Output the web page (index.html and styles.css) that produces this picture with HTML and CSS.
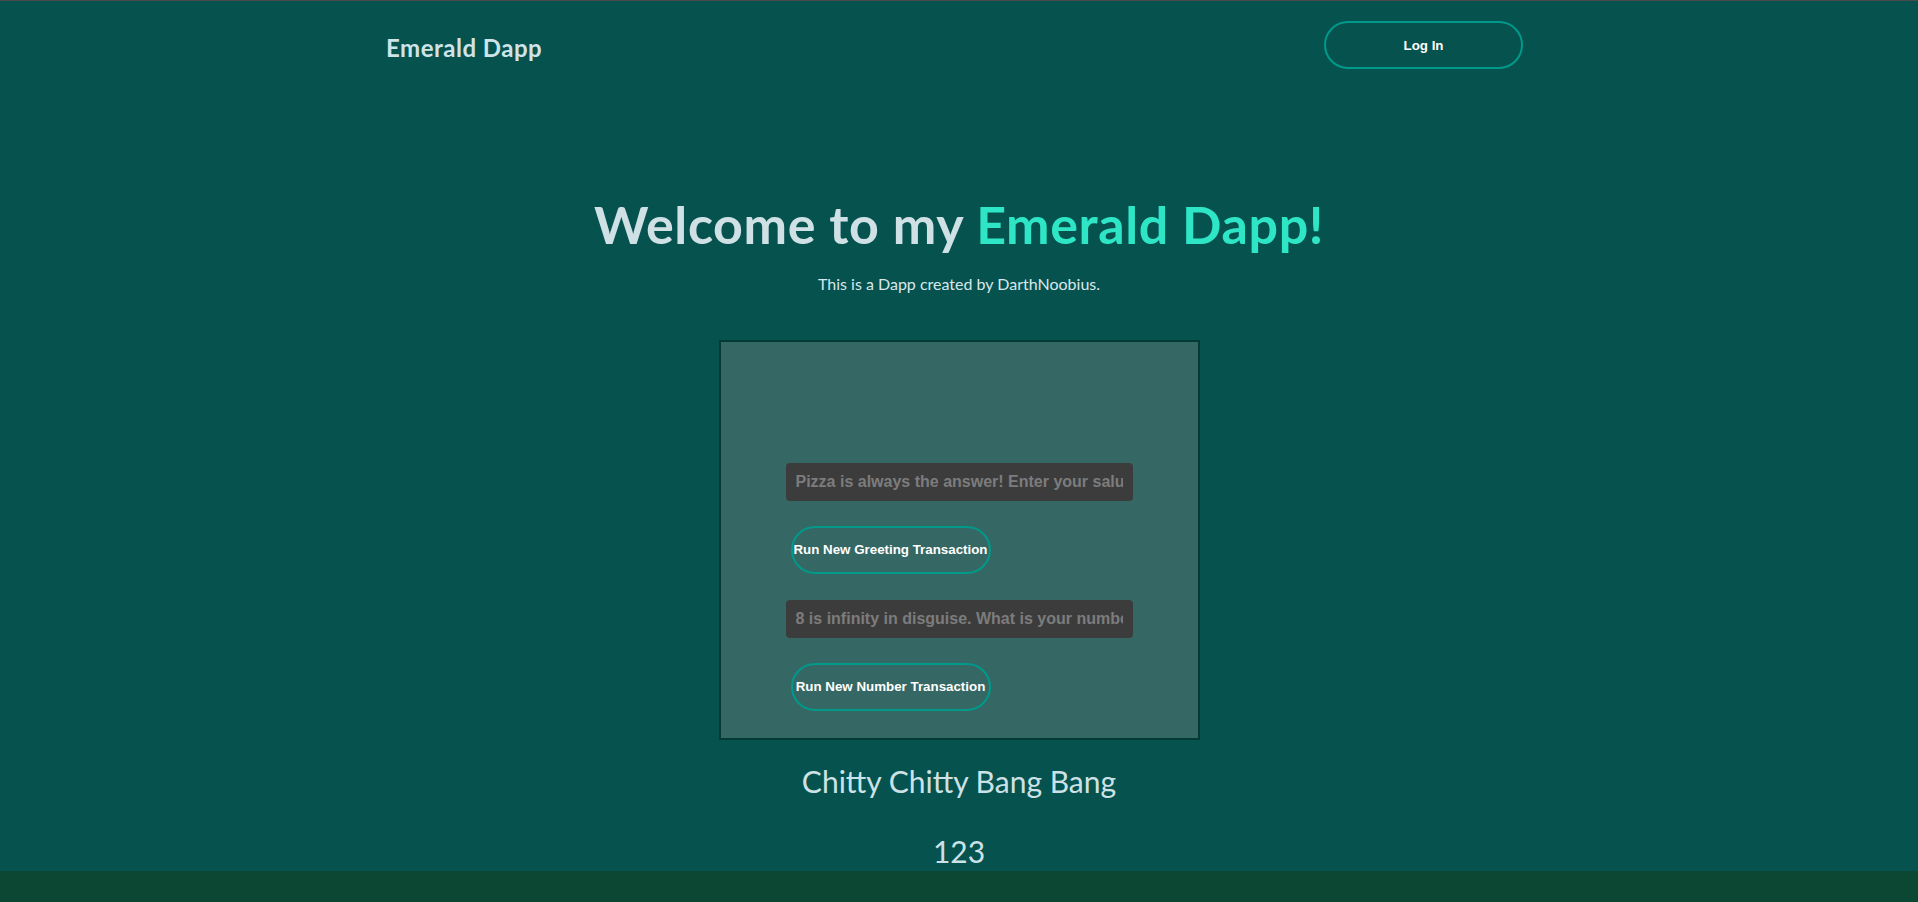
FILE: index.html
```html
<!DOCTYPE html>
<html lang="en">
<head>
<meta charset="utf-8">
<title>Emerald Dapp</title>
<link rel="stylesheet" href="styles.css">
</head>
<body>
<div class="page">
  <header class="nav">
    <span class="brand">Emerald Dapp</span>
    <button class="pill login">Log In</button>
  </header>
  <main class="main">
    <h1 class="title">Welcome to my <span class="accent">Emerald Dapp!</span></h1>
    <p class="subtitle">This is a Dapp created by DarthNoobius.</p>
    <div class="card">
      <input class="field" type="text" placeholder="Pizza is always the answer! Enter your salutation">
      <button class="pill action">Run New Greeting Transaction</button>
      <input class="field" type="text" placeholder="8 is infinity in disguise. What is your number?">
      <button class="pill action">Run New Number Transaction</button>
    </div>
    <p class="big first">Chitty Chitty Bang Bang</p>
    <p class="big second">123</p>
  </main>
  <footer class="footer"></footer>
</div>
</body>
</html>
```

FILE: styles.css
```css
html, body {
  margin: 0;
  padding: 0;
  background: #05524f;
}
body {
  font-family: "Lato", "Noto Sans", sans-serif;
  color: #d2e3e8;
}
.page {
  min-height: 100vh;
  display: flex;
  flex-direction: column;
  border-top: 1px solid #4b4b4b;
  box-sizing: border-box;
}
.nav {
  display: flex;
  justify-content: space-between;
  align-items: center;
  padding: 20px 395px 21px 386px;
}
.brand {
  font-size: 24px;
  letter-spacing: 0.5px;
  font-weight: 700;
  color: #cfe4e9;
  margin-top: 4px;
}
.pill {
  font-family: "Liberation Sans", Arial, sans-serif;
  font-weight: 700;
  font-size: 13.33px;
  color: #ffffff;
  background: transparent;
  border: 2px solid #00998a;
  border-radius: 24px;
  cursor: pointer;
}
.login {
  width: 199px;
  height: 48px;
}
.main {
  flex: 1;
  display: flex;
  flex-direction: column;
  align-items: center;
  padding-top: 103px;
}
.title {
  margin: 0;
  font-size: 52px;
  letter-spacing: 0.6px;
  line-height: 1.2;
  font-weight: 700;
  color: #d0e1e6;
}
.accent {
  color: #2ee6c5;
}
.subtitle {
  margin: 19px 0 0;
  font-size: 16px;
  line-height: 1.2;
  color: #d8e7ec;
}
.card {
  margin-top: 46px;
  width: 481px;
  height: 400px;
  box-sizing: border-box;
  border: 2px solid #033a36;
  background: #356864;
  padding: 121px 65px 27px;
  display: flex;
  flex-direction: column;
  align-items: flex-start;
}
.field {
  width: 347px;
  height: 38px;
  box-sizing: border-box;
  border: none;
  border-radius: 4px;
  background: #3c3c3c;
  padding: 0 10px;
  font-family: "Liberation Sans", Arial, sans-serif;
  font-weight: 700;
  font-size: 16px;
  color: #dddddd;
  outline: none;
}
.field::placeholder {
  color: #7c7c7c;
}
.action {
  width: 200px;
  height: 48px;
  padding: 0;
  margin: 25px 0 26px 5px;
}
.action:last-child {
  margin-bottom: 0;
}
.big {
  margin: 0;
  font-size: 30px;
  line-height: 1.2;
  font-weight: 400;
  color: #cde2e6;
}
.first {
  margin-top: 23px;
}
.second {
  margin-top: 34px;
}
.footer {
  height: 31px;
  background: #0b4733;
}
```
